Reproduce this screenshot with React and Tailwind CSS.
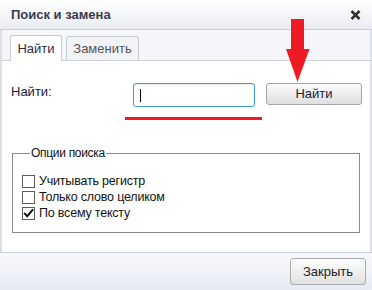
import React from "react";

function Check({ checked, label }) {
  return (
    <div className="flex h-[16px] items-center gap-[4px]">
      <span className="flex h-[13px] w-[13px] items-center justify-center border border-[#5c5c5c] bg-white">
        {checked && (
          <svg width="11" height="11" viewBox="0 0 11 11">
            <path d="M1.8 5.6 L4.2 8.2 L9.4 2.2" fill="none" stroke="#111" strokeWidth="2" strokeLinecap="square" />
          </svg>
        )}
      </span>
      <span className="text-[12.5px] leading-[16px] tracking-[-0.2px] text-[#111]">{label}</span>
    </div>
  );
}

export default function App() {
  return (
    <div
      className="relative flex h-[290px] w-[372px] flex-col overflow-hidden bg-white"
      style={{ fontFamily: '"Liberation Sans", Arial, sans-serif' }}
    >
      {/* Title bar */}
      <div className="flex h-[30px] items-center justify-between border-b border-[#c9ced7] bg-gradient-to-b from-white to-[#e8ecf2] pl-[11px] pr-[11px]">
        <span className="text-[13px] font-bold leading-[15px] text-[#3b3b4d]">Поиск и замена</span>
        <svg width="11" height="10" viewBox="0 0 11 10">
          <path d="M1.5 1 L9.5 9 M9.5 1 L1.5 9" stroke="#333" strokeWidth="2.6" />
        </svg>
      </div>

      {/* Tabs strip */}
      <div className="flex h-[31px] items-end gap-[4px] border-x-2 border-b border-x-[#dde0e6] border-b-[#cdd1d8] bg-[#f4f6fa] pl-[8px]">
        <div className="mb-[-1px] flex h-[26px] w-[52px] items-center justify-center rounded-t-[3px] border border-b-0 border-[#c6cbd3] bg-white text-[13px] text-[#2d2d45]">
          Найти
        </div>
        <div className="flex h-[24px] w-[73px] items-center justify-center rounded-t-[3px] border border-b-0 border-[#c6cbd3] bg-[#f1f3f7] text-[13px] text-[#555]">
          Заменить
        </div>
      </div>

      {/* Content */}
      <div className="relative flex flex-1 flex-col border-x-2 border-[#dde0e6] bg-white pl-[9px] pt-[22px]">
        <div className="flex items-start">
          <span className="mt-[1px] w-[122px] text-[13px] leading-[15px] text-[#1b1b3a]">Найти:</span>
          <div className="flex h-[24px] w-[122px] items-center rounded-[3px] border border-[#3c9be6] bg-white pl-[6px] shadow-[inset_0_1px_2px_rgba(0,0,0,0.12)]">
            <span className="h-[13px] w-[1px] bg-black" />
          </div>
          <button className="ml-[11px] flex h-[22px] w-[96px] items-center justify-center rounded-[3px] border border-[#a3a5aa] bg-gradient-to-b from-[#fbfbfb] to-[#dfdfdf] text-[13px] text-[#1b1b3a]">
            Найти
          </button>
        </div>
        <span className="absolute left-[123px] top-[56px] h-[3px] w-[137px] bg-[#ed1c24]" />

        <fieldset className="ml-[1px] mt-[39px] w-[348px] border border-[#8a8a8a] pb-[11px] pl-[9px] pt-[12px]">
          <legend className="ml-[8px] px-[1px] text-[12px] leading-[15px] tracking-[-0.3px] text-[#111]">Опции поиска</legend>
          <Check label="Учитывать регистр" />
          <Check label="Только слово целиком" />
          <Check checked label="По всему тексту" />
        </fieldset>
      </div>

      {/* Footer */}
      <div className="flex h-[38px] items-center justify-end border-t border-[#cdd1d8] bg-gradient-to-b from-[#f8f9fc] to-[#e6ebf3] pr-[6px]">
        <button className="flex h-[27px] w-[76px] items-center justify-center rounded-[3px] border border-[#a9abb0] bg-gradient-to-b from-white to-[#e0e0e0] text-[13px] text-[#222]">
          Закрыть
        </button>
      </div>

      {/* Red annotation arrow */}
      <svg className="absolute left-[286px] top-[19px]" width="24" height="64" viewBox="0 0 24 64">
        <path d="M5 0 H18 V30 H23.5 L11.5 63 L0 30 H5 Z" fill="#ed1c24" />
      </svg>
    </div>
  );
}
